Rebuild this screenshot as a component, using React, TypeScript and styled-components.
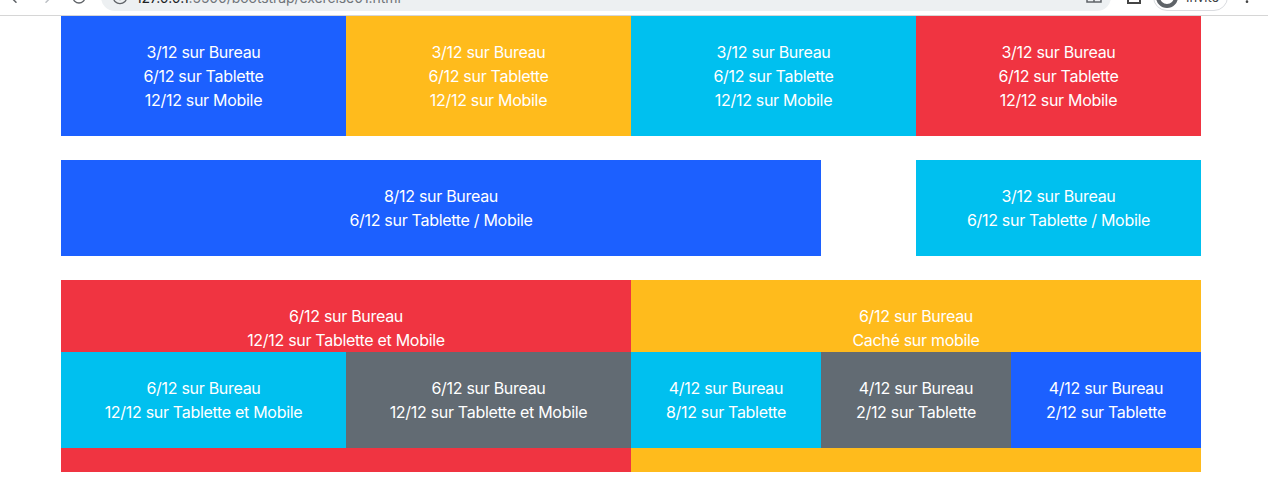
import React from 'react';
import styled, { createGlobalStyle } from 'styled-components';
import { ArrowLeft, ArrowRight, EllipsisVertical, Info, RotateCw } from 'lucide-react';

const GlobalStyle = createGlobalStyle`
  html, body {
    margin: 0;
    padding: 0;
    background: #fff;
  }
  body {
    width: 1268px;
    height: 504px;
    overflow: hidden;
    font-family: Inter, "Liberation Sans", sans-serif;
  }
`;

const colors = {
  blue: '#1c60ff',
  yellow: '#ffbb1c',
  cyan: '#00c0ef',
  red: '#f03441',
  gray: '#626b73',
};

type Tone = keyof typeof colors;

// only the bottom of the browser toolbar is visible in the capture
const BrowserBar = styled.div`
  height: 16px;
  box-sizing: border-box;
  border-bottom: 1px solid #d6d6d6;
  overflow: hidden;
`;

const Toolbar = styled.div`
  height: 38px;
  margin-top: -22px;
  display: flex;
  align-items: center;
`;

const NavIcon = styled.span<{ $left: number; $color?: string }>`
  display: flex;
  flex: none;
  margin-left: ${p => p.$left}px;
  color: ${p => p.$color ?? '#5f6368'};
`;

const UrlPill = styled.div`
  flex: none;
  width: 1010px;
  height: 28px;
  margin-left: 14px;
  padding: 0 9px 0 11px;
  box-sizing: border-box;
  border-radius: 14px;
  background: #edf0f2;
  display: flex;
  align-items: center;
  font-size: 14px;
  letter-spacing: -0.08px;
  color: #70757a;
`;

const Host = styled.span`
  color: #202124;
`;

const UrlText = styled.span`
  margin-left: 8px;
  flex: 1;
`;

const ExtensionBox = styled.div`
  flex: none;
  width: 14px;
  height: 14px;
  margin-left: 16px;
  box-sizing: border-box;
  border: 2px solid #444;
`;

const ProfilePill = styled.div`
  flex: none;
  width: 75px;
  height: 28px;
  margin-left: 12px;
  padding-left: 2px;
  box-sizing: border-box;
  border: 1px solid #dadce0;
  border-radius: 14px;
  display: flex;
  align-items: center;
  font-size: 13px;
  color: #3c4043;
`;

const Avatar = styled.div`
  width: 22px;
  height: 22px;
  box-sizing: border-box;
  border: 4px solid #5f6368;
  border-radius: 50%;
  margin-right: 8px;
`;

const Container = styled.div`
  width: 1140px;
  margin-left: 61px;
  font-size: 16px;
  line-height: 24px;
  letter-spacing: -0.3px;
  color: #fff;
`;

const Row = styled.div<{ $gap?: number }>`
  display: flex;
  flex-wrap: wrap;
  margin-bottom: ${p => p.$gap ?? 24}px;
`;

const Col = styled.div<{ $tone: Tone; $span: number; $offset?: number }>`
  flex: 0 0 ${p => (p.$span / 12) * 100}%;
  margin-left: ${p => ((p.$offset ?? 0) / 12) * 100}%;
  box-sizing: border-box;
  padding: 24px 15px;
  background: ${p => colors[p.$tone]};
  text-align: center;
`;

const NestedCol = styled(Col)`
  padding: 0;
`;

const Inner = styled.div`
  padding-top: 24px;
`;

const Nested = styled.div`
  display: flex;
`;

const Cell = styled.div<{ $tone: Tone; $span: number }>`
  flex: 0 0 ${p => (p.$span / 12) * 100}%;
  box-sizing: border-box;
  padding: 24px 15px;
  background: ${p => colors[p.$tone]};
`;

const Bottom = styled.div`
  height: 24px;
`;

const Lines = ({ items }: { items: string[] }) => (
  <>
    {items.map(t => (
      <div key={t}>{t}</div>
    ))}
  </>
);

const ReaderIcon = () => (
  <svg width="16" height="16" viewBox="0 0 16 16" fill="none" stroke="#5f6368" strokeWidth="1.5">
    <rect x="1" y="2" width="14" height="11" />
    <path d="M8 2v11M3 10h3M10 10h3" />
  </svg>
);

const top = ['3/12 sur Bureau', '6/12 sur Tablette', '12/12 sur Mobile'];
const wide = ['6/12 sur Bureau', '12/12 sur Tablette et Mobile'];

export default function App() {
  return (
    <>
      <GlobalStyle />
      <BrowserBar>
        <Toolbar>
          <NavIcon $left={7}>
            <ArrowLeft size={18} />
          </NavIcon>
          <NavIcon $left={12} $color="#bdc1c6">
            <ArrowRight size={18} />
          </NavIcon>
          <NavIcon $left={16}>
            <RotateCw size={16} />
          </NavIcon>
          <UrlPill>
            <NavIcon $left={0}>
              <Info size={16} />
            </NavIcon>
            <UrlText>
              <Host>127.0.0.1</Host>:5500/bootstrap/exercise01.html
            </UrlText>
            <ReaderIcon />
          </UrlPill>
          <ExtensionBox />
          <ProfilePill>
            <Avatar />
            Invité
          </ProfilePill>
          <NavIcon $left={11} $color="#444">
            <EllipsisVertical size={16} />
          </NavIcon>
        </Toolbar>
      </BrowserBar>
      <Container>
        <Row>
          {(['blue', 'yellow', 'cyan', 'red'] as Tone[]).map(t => (
            <Col key={t} $tone={t} $span={3}>
              <Lines items={top} />
            </Col>
          ))}
        </Row>
        <Row>
          <Col $tone="blue" $span={8}>
            <Lines items={['8/12 sur Bureau', '6/12 sur Tablette / Mobile']} />
          </Col>
          <Col $tone="cyan" $span={3} $offset={1}>
            <Lines items={['3/12 sur Bureau', '6/12 sur Tablette / Mobile']} />
          </Col>
        </Row>
        <Row $gap={0}>
          <NestedCol $tone="red" $span={6}>
            <Inner>
              <Lines items={wide} />
            </Inner>
            <Nested>
              <Cell $tone="cyan" $span={6}>
                <Lines items={wide} />
              </Cell>
              <Cell $tone="gray" $span={6}>
                <Lines items={wide} />
              </Cell>
            </Nested>
            <Bottom />
          </NestedCol>
          <NestedCol $tone="yellow" $span={6}>
            <Inner>
              <Lines items={['6/12 sur Bureau', 'Caché sur mobile']} />
            </Inner>
            <Nested>
              <Cell $tone="cyan" $span={4}>
                <Lines items={['4/12 sur Bureau', '8/12 sur Tablette']} />
              </Cell>
              <Cell $tone="gray" $span={4}>
                <Lines items={['4/12 sur Bureau', '2/12 sur Tablette']} />
              </Cell>
              <Cell $tone="blue" $span={4}>
                <Lines items={['4/12 sur Bureau', '2/12 sur Tablette']} />
              </Cell>
            </Nested>
            <Bottom />
          </NestedCol>
        </Row>
      </Container>
    </>
  );
}
